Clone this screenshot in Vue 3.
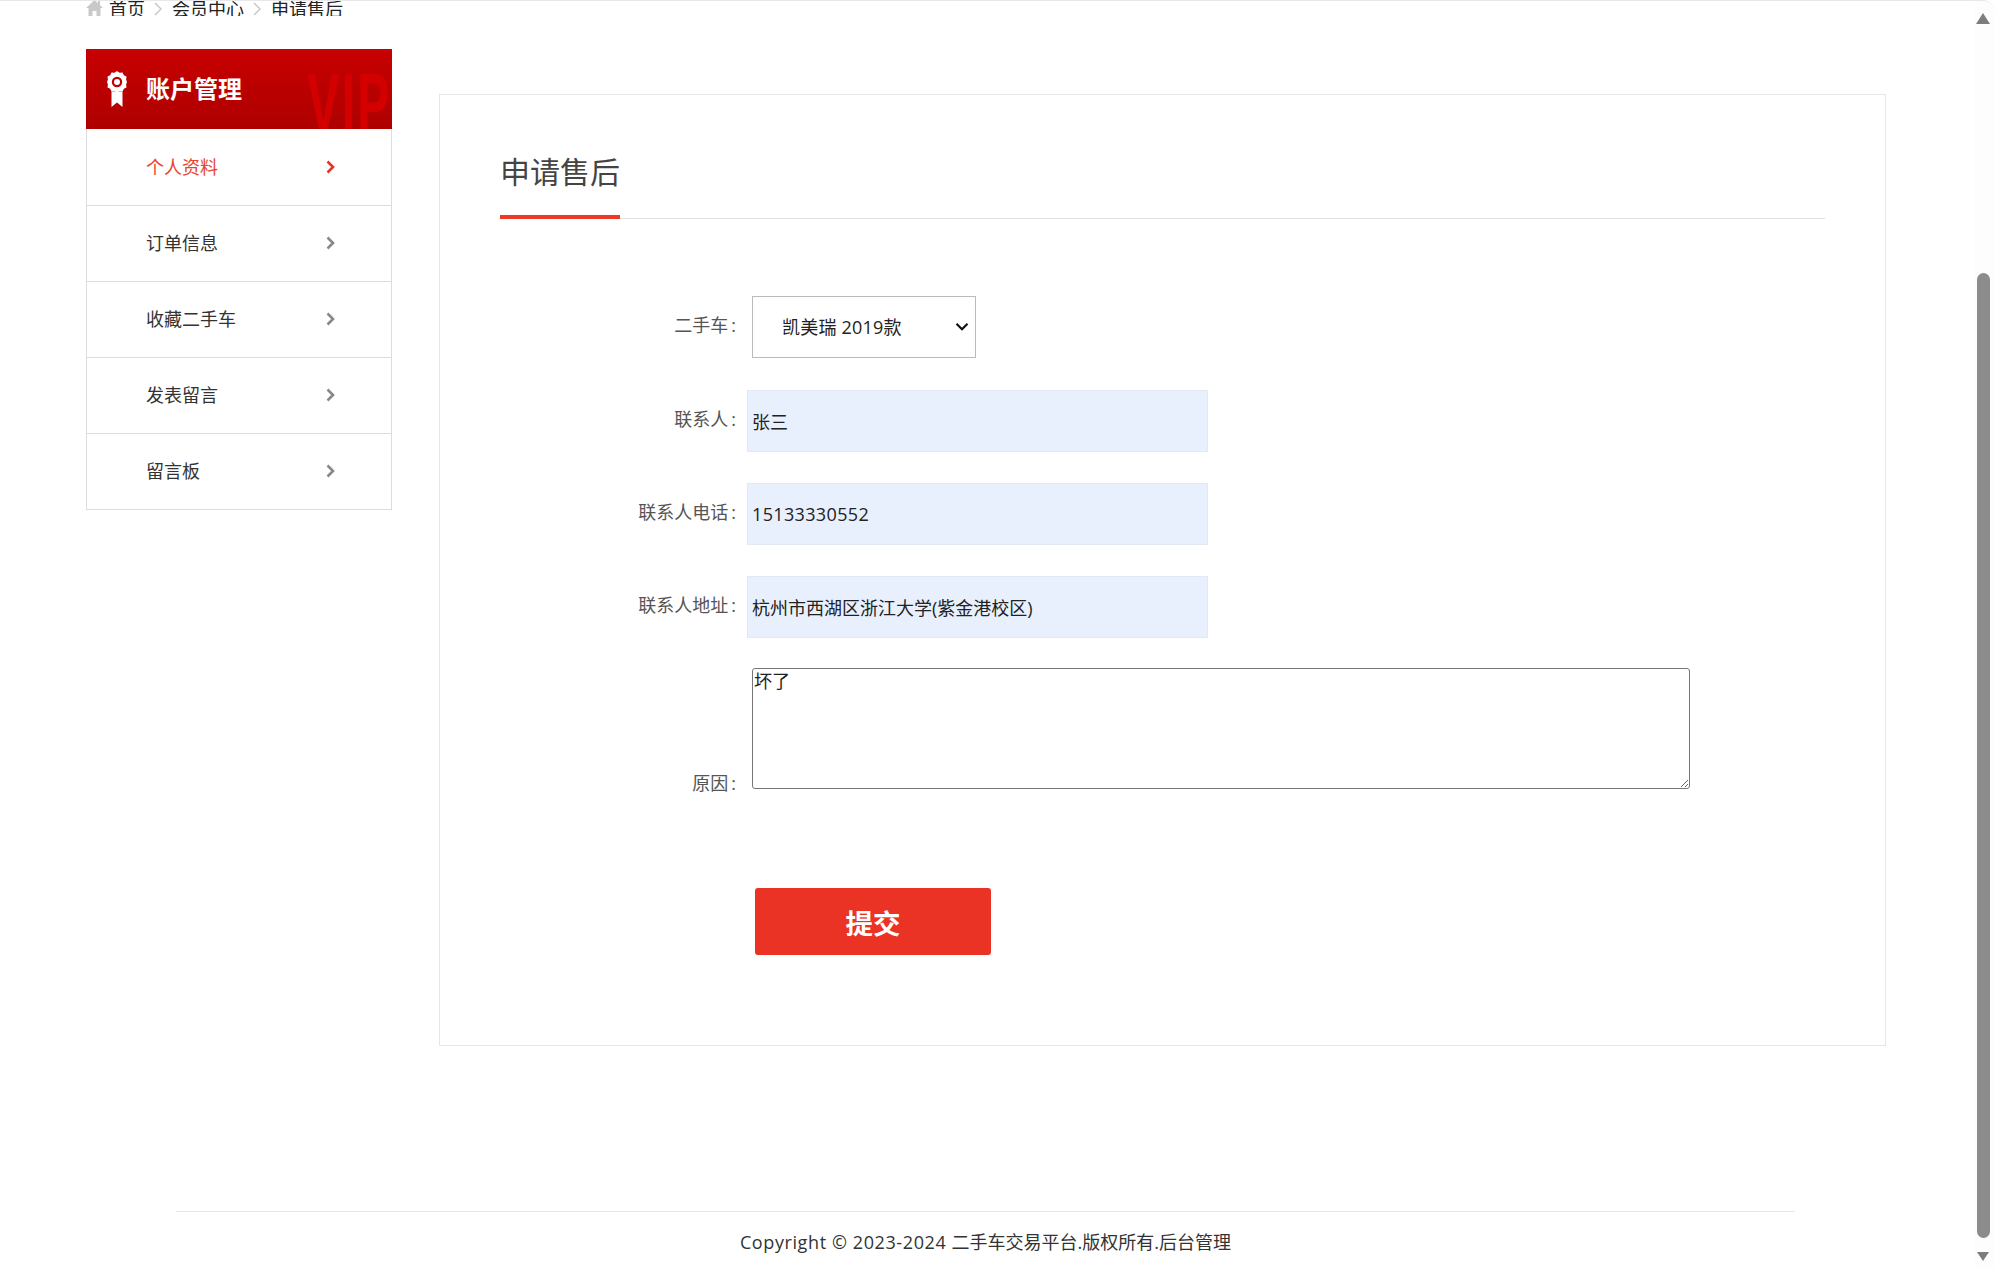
<script setup>
import { ref } from 'vue'

const menu = [
  { name: '个人资料', active: true },
  { name: '订单信息' },
  { name: '收藏二手车' },
  { name: '发表留言' },
  { name: '留言板' },
]
const car = ref('凯美瑞 2019款')
const crumbs = ['会员中心', '申请售后']
</script>

<template>
  <div class="page">
    <nav class="crumbs">
      <svg class="home" width="17" height="16" viewBox="0 0 17 16">
        <path d="M8.500 0 0 8h2.500v8h4v-5h4v5h4V8H17l-3-2.800V1h-2v2.300z" fill="#c9c9c9" />
      </svg>
      <span class="crumb first">首页</span>
      <template v-for="c in crumbs" :key="c">
        <svg class="sep" width="8" height="14" viewBox="0 0 8 14">
          <path d="M1 1l6 6-6 6" fill="none" stroke="#c8c8c8" stroke-width="1.500" />
        </svg>
        <span class="crumb">{{ c }}</span>
      </template>
    </nav>

    <div class="layout">
      <aside class="side">
        <header class="side-head">
          <svg class="badge" width="20" height="36" viewBox="0 0 20 36">
            <path d="M10 0l2.500 1.800 3-.4 1.300 2.800 2.700 1.300-.4 3 .9 2.500-.9 2.500.4 3-2.700 1.300-1.300 2.800-3-.4L10 22l-2.500-1.800-3 .4-1.300-2.800L.5 16.500l.4-3L0 11l.9-2.500-.4-3 2.700-1.300 1.300-2.800 3 .4z" fill="#fff" />
            <circle cx="10" cy="11" r="5.200" fill="#c00000" />
            <circle cx="10" cy="11" r="3" fill="#fff" />
            <path d="M4.500 20.500h11V36L10 31.500 4.500 36z" fill="#fff" />
          </svg>
          <span class="side-title">账户管理</span>
          <span class="vip">VIP</span>
        </header>
        <ul class="menu">
          <li v-for="m in menu" :key="m.name" class="item" :class="{ active: m.active }">
            <span class="item-name">{{ m.name }}</span>
            <svg class="chev" width="9" height="14" viewBox="0 0 9 14">
              <path d="M1.500 1.500 7 7l-5.500 5.500" fill="none" stroke="currentColor" stroke-width="2.600" />
            </svg>
          </li>
        </ul>
      </aside>

      <main class="panel">
        <h1 class="title"><span class="title-text">申请售后</span></h1>

        <form class="form" @submit.prevent>
          <div class="row row-select">
            <label class="label">二手车<span class="colon">:</span></label>
            <div class="select-wrap">
              <select v-model="car" class="select">
                <option>凯美瑞 2019款</option>
              </select>
              <svg class="select-arrow" width="14" height="10" viewBox="0 0 14 10">
                <path d="M1.500 1.800 7 7.300l5.500-5.500" fill="none" stroke="#111" stroke-width="2.200" />
              </svg>
            </div>
          </div>
          <div class="row row-input">
            <label class="label">联系人<span class="colon">:</span></label>
            <input class="input" value="张三" />
          </div>
          <div class="row row-input">
            <label class="label">联系人电话<span class="colon">:</span></label>
            <input class="input phone" value="15133330552" />
          </div>
          <div class="row row-input last">
            <label class="label">联系人地址<span class="colon">:</span></label>
            <input class="input" value="杭州市西湖区浙江大学(紫金港校区)" />
          </div>
          <div class="row row-area">
            <label class="label">原因<span class="colon">:</span></label>
            <textarea class="area">坏了</textarea>
          </div>
          <button type="submit" class="submit">提交</button>
        </form>
      </main>
    </div>

    <footer class="foot">
      <span class="latin">Copyright © 2023-2024 </span>二手车交易平台.版权所有.后台管理
    </footer>

    <div class="scrollbar" aria-hidden="true">
      <span class="arrow up"></span>
      <span class="thumb"></span>
      <span class="arrow down"></span>
    </div>
  </div>
</template>

<style>
html, body { margin: 0; height: 100%; overflow: hidden; background: #fff; }
</style>

<style scoped>
.page {
  box-sizing: border-box;
  height: 1269px;
  border-top: 1px solid #e8e8e8;
  border-top-right-radius: 12px;
  font-family: "Open Sans", "Noto Sans CJK SC", sans-serif;
  font-size: 18px;
  color: #222;
  overflow: hidden;
  position: relative;
  background: #fff;
}
.crumbs {
  display: flex;
  align-items: center;
  height: 15px;
  padding-left: 86px;
  overflow: hidden;
  line-height: 16px;
  color: #222;
}
.home { flex: none; margin-top: -2px; }
.crumb { white-space: nowrap; font-family: "Noto Sans CJK SC", sans-serif; margin-top: -1px; }
.crumb.first { margin-left: 6px; }
.sep { flex: none; margin: 0 10px 0 9px; }

.layout { display: flex; align-items: flex-start; padding-left: 86px; }
.side { width: 306px; margin-top: 33px; flex: none; }
.side-head {
  position: relative;
  display: flex;
  align-items: center;
  height: 80px;
  padding-left: 21px;
  overflow: hidden;
  background: linear-gradient(#c80000, #ae0000);
}
.badge { flex: none; }
.side-title {
  margin: -3px 0 0 19px;
  font-family: "Noto Sans CJK SC", sans-serif;
  font-size: 24px;
  font-weight: 700;
  color: #fff;
}
.vip {
  position: absolute;
  right: 0;
  top: 11px;
  font-family: "Liberation Sans", sans-serif;
  font-size: 86px;
  font-weight: 700;
  line-height: 86px;
  color: #d40000;
  transform: scaleX(0.56);
  transform-origin: right top;
  letter-spacing: 4px;
}
.menu { list-style: none; margin: 0; padding: 1px 0 0; border: 1px solid #ddd; border-top: 0; }
.item {
  display: flex;
  align-items: center;
  justify-content: space-between;
  box-sizing: border-box;
  height: 76px;
  padding: 0 56px 0 59px;
  border-bottom: 1px solid #ddd;
  font-family: "Noto Sans CJK SC", sans-serif;
}
.item:last-child { border-bottom: 0; height: 75px; }
.item-name { color: #333; display: block; line-height: 26px; margin-top: -3px; }
.chev { color: #888; flex: none; margin-top: -2px; }
.item.active .item-name { color: #e8432f; height: 23px; margin-bottom: 3px; overflow: hidden; }
.item.active .chev { color: #e8352a; }

.panel {
  box-sizing: border-box;
  width: 1447px;
  height: 952px;
  margin: 78px 0 0 47px;
  padding: 0 60px;
  border: 1px solid #e6e6e6;
  background: #fff;
  flex: none;
}
.title {
  margin: 0;
  height: 124px;
  box-sizing: border-box;
  border-bottom: 1px solid #e0e0e0;
  display: flex;
  align-items: flex-end;
  font-family: "Noto Sans CJK SC", sans-serif;
  font-size: 30px;
  font-weight: 400;
  color: #444;
}
.title-text {
  display: block;
  height: 73px;
  line-height: 48px;
  box-sizing: border-box;
  border-bottom: 4px solid #ee3a24;
  margin-bottom: -1px;
  width: 120px;
  white-space: nowrap;
}
.form { display: block; padding-top: 77px; font-family: "Open Sans", "Noto Sans CJK SC", sans-serif; }
.row { display: flex; align-items: center; }
.label {
  width: 236px;
  flex: none;
  text-align: right;
  color: #555;
  font-size: 18px;
  line-height: 24px;
  margin-top: -5px;
}
.colon { margin-left: 3px; }
.row-select { margin-bottom: 32px; }
.row-input { margin-bottom: 31px; }
.row-input.last { margin-bottom: 30px; }
.select-wrap {
  position: relative;
  width: 224px;
  height: 62px;
  margin-left: 16px;
}
.select {
  display: block;
  appearance: none;
  box-sizing: border-box;
  width: 100%;
  height: 100%;
  padding: 0 0 0 29px;
  border: 1px solid #bbb;
  border-radius: 0;
  background: #fff;
  color: #222;
  font: inherit;
  font-size: 18px;
  letter-spacing: .2px;
}
.select-arrow {
  position: absolute;
  right: 7px;
  top: 26px;
  pointer-events: none;
}
.input {
  box-sizing: border-box;
  width: 461px;
  height: 62px;
  margin-left: 11px;
  padding: 0 4px;
  border: 1px solid #e2e8f4;
  background: #e8f0fe;
  color: #222;
  font: inherit;
  font-size: 18px;
  outline: 0;
}
.phone { letter-spacing: .35px; }
.row-area { align-items: flex-end; }
.row-area .label { margin: 0 0 -6px; }
.area {
  box-sizing: border-box;
  width: 938px;
  height: 121px;
  margin-left: 16px;
  padding: 1px;
  border: 1px solid #767676;
  border-radius: 3px;
  color: #222;
  font: inherit;
  font-size: 18px;
  line-height: 22px;
  background: #fff;
}
.submit {
  display: block;
  box-sizing: border-box;
  width: 236px;
  height: 67px;
  margin: 99px 0 0 255px;
  padding: 1px 0 0;
  border: 0;
  border-radius: 3px;
  background: #ea3324;
  color: #fff;
  font-family: "Noto Sans CJK SC", sans-serif;
  font-size: 27.500px;
  font-weight: 700;
}
.foot {
  width: 1619px;
  box-sizing: border-box;
  margin: 165px 0 0 176px;
  border-top: 1px solid #e6e6e6;
  padding-top: 16px;
  text-align: center;
  line-height: 28px;
  color: #333;
}
.latin { letter-spacing: .6px; }
.scrollbar {
  position: absolute;
  top: -1px;
  right: 0;
  width: 20px;
  height: 1269px;
  background: #fdfdfd;
}
.thumb {
  position: absolute;
  left: 2px;
  top: 273px;
  width: 13px;
  height: 965px;
  border-radius: 7px;
  background: #8c8c8c;
}
.arrow {
  position: absolute;
  left: 1px;
  width: 0;
  height: 0;
  border-left: 7.500px solid transparent;
  border-right: 7.500px solid transparent;
}
.arrow.up { top: 13px; border-bottom: 11px solid #7d7d7d; }
.arrow.down { top: 1252px; left: 2px; border-left-width: 6.500px; border-right-width: 6.500px; border-top: 9px solid #7d7d7d; }
</style>
